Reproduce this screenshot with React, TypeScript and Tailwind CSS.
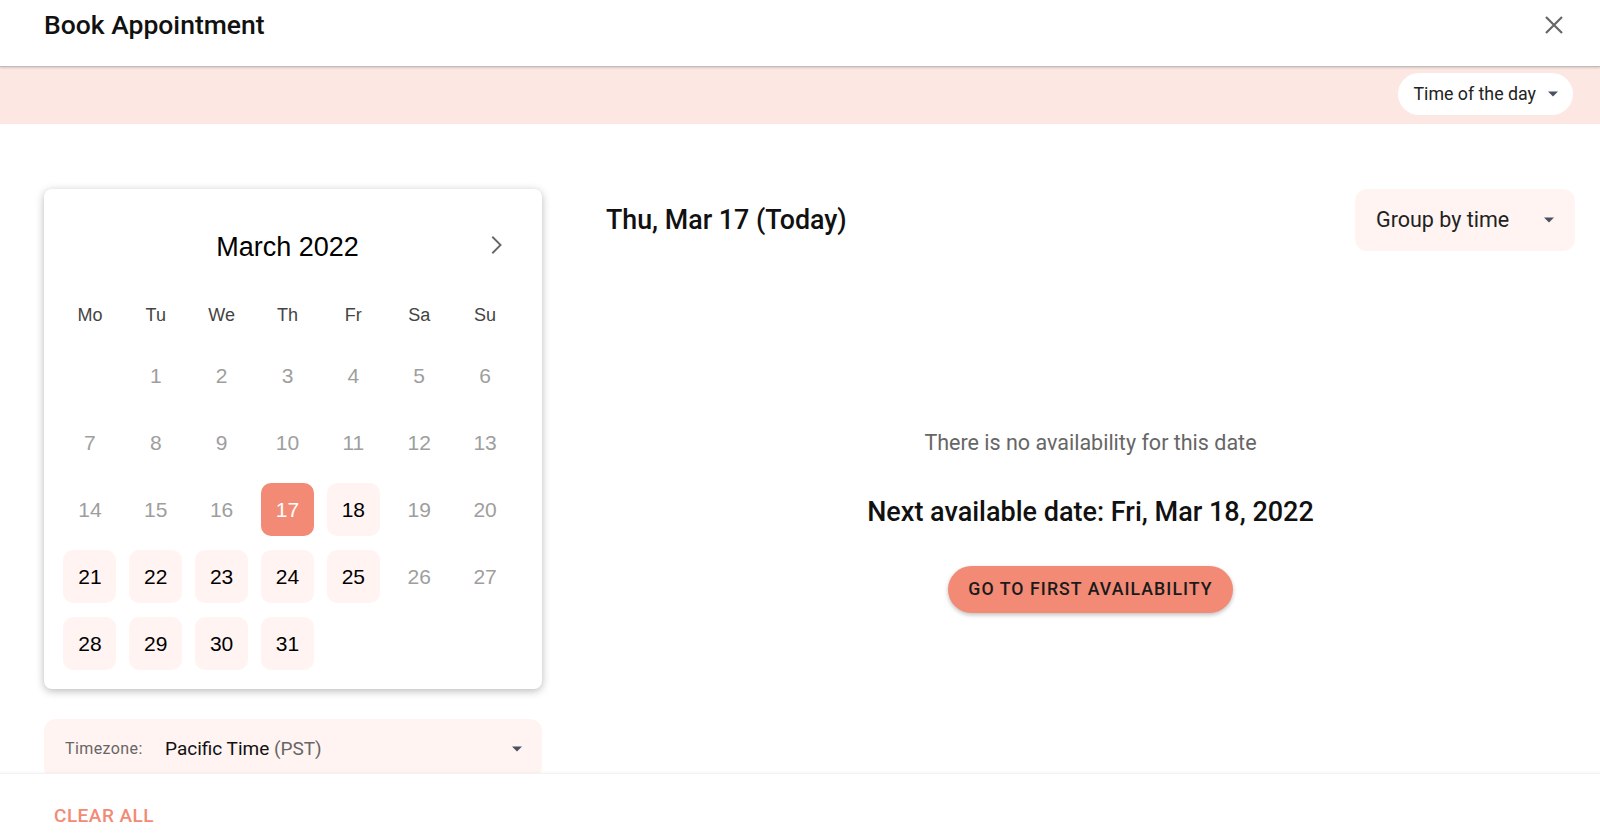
import React from 'react'

const roboto = { fontFamily: 'Roboto, "Liberation Sans", sans-serif' }

type Day = { n: number; kind: 'off' | 'open' | 'today' }

const off = (n: number): Day => ({ n, kind: 'off' })
const open = (n: number): Day => ({ n, kind: 'open' })

const weeks: Day[][] = [
  [off(0), off(1), off(2), off(3), off(4), off(5), off(6)],
  [off(7), off(8), off(9), off(10), off(11), off(12), off(13)],
  [off(14), off(15), off(16), { n: 17, kind: 'today' }, open(18), off(19), off(20)],
  [open(21), open(22), open(23), open(24), open(25), off(26), off(27)],
  [open(28), open(29), open(30), open(31), off(0), off(0), off(0)],
]

const Caret = ({ className = '' }: { className?: string }) => (
  <svg width="10" height="6" viewBox="0 0 10 5" className={className}>
    <path d="M0 0 L10 0 L5 5 Z" fill="#4a5160" />
  </svg>
)

const Calendar: React.FC = () => (
  <div
    className="w-[498px] h-[500px] shrink-0 rounded-lg bg-white shadow-[0_2px_8px_rgba(0,0,0,0.28)] pl-[13px] pr-[24px] pt-[38px]"
    style={{ fontFamily: '"Liberation Sans", Arial, sans-serif' }}
  >
    <div className="relative flex items-center justify-center h-[40px]">
      <span className="text-[27px] text-black">March 2022</span>
      <svg
        width="22"
        height="22"
        viewBox="0 0 24 24"
        className="absolute right-[11px] top-[7px]"
        fill="none"
        stroke="#666"
        strokeWidth="2"
      >
        <path d="M8 3 L17 12 L8 21" />
      </svg>
    </div>
    <div className="grid grid-cols-7 mt-[35px] text-[18px] text-[#444]">
      {['Mo', 'Tu', 'We', 'Th', 'Fr', 'Sa', 'Su'].map((d) => (
        <div key={d} className="text-center">
          {d}
        </div>
      ))}
    </div>
    <div className="mt-[20px] flex flex-col gap-[14px]">
      {weeks.map((week, i) => (
        <div key={i} className="grid grid-cols-7">
          {week.map((d, j) => (
            <div key={j} className="flex justify-center">
              <div
                className={
                  'w-[53px] h-[53px] rounded-[10px] flex items-center justify-center text-[21px] ' +
                  (d.kind === 'today'
                    ? 'bg-[#f28a75] text-white'
                    : d.kind === 'open'
                      ? 'bg-[#fff4f2] text-black'
                      : 'text-[#9e9e9e]')
                }
              >
                {d.n > 0 ? d.n : ''}
              </div>
            </div>
          ))}
        </div>
      ))}
    </div>
  </div>
)

export default function App() {
  return (
    <div className="w-[1600px] h-[834px] flex flex-col bg-white overflow-hidden" style={roboto}>
      <header className="h-[67px] shrink-0 flex items-start justify-between pl-[44px] pr-[34px] pt-[7px] border-b border-[#bdbdbd] shadow-[0_1px_2px_rgba(0,0,0,0.15)] relative z-10">
        <h1 className="text-[26.5px] font-medium text-[#111] leading-[36px]">Book Appointment</h1>
        <svg width="24" height="24" viewBox="0 0 24 24" className="mt-[6px]" stroke="#666" strokeWidth="2.2" fill="none">
          <path d="M4 4 L20 20 M20 4 L4 20" />
        </svg>
      </header>

      <div className="h-[57px] shrink-0 bg-[#fde7e3] flex items-center justify-end pr-[27px]">
        <button className="h-[42px] px-[15px] rounded-full bg-white flex items-center gap-[12px] text-[17.8px] text-[#222] mt-[-3px]">
          Time of the day
          <Caret />
        </button>
      </div>

      <main className="flex-1 overflow-hidden flex pl-[44px] pr-[25px] pt-[65px]">
        <div className="flex flex-col gap-[30px] shrink-0">
          <Calendar />
          <div className="w-[498px] h-[60px] shrink-0 rounded-[12px] bg-[#fff4f2] flex items-center pl-[21px] pr-[20px]">
            <span className="text-[16px] text-[#666] tracking-wide w-[100px]">Timezone:</span>
            <span className="text-[19px] text-[#111]">
              Pacific Time <span className="text-[#666]">(PST)</span>
            </span>
            <Caret className="ml-auto" />
          </div>
        </div>

        <section className="flex-1 ml-[64px] flex flex-col">
          <div className="flex items-start justify-between">
            <h2 className="text-[26.8px] leading-[32px] font-medium text-[#111] mt-[15px]">Thu, Mar 17 (Today)</h2>
            <button className="w-[220px] h-[62px] rounded-[12px] bg-[#fff4f2] flex items-center justify-between pl-[21px] pr-[21px] text-[21.5px] text-[#222]">
              Group by time
              <Caret />
            </button>
          </div>
          <div className="flex flex-col items-center mt-[179px]">
            <p className="text-[21.5px] leading-[26px] text-[#666]">There is no availability for this date</p>
            <p className="text-[27px] leading-[32px] font-medium text-[#111] mt-[40px]">
              Next available date: Fri, Mar 18, 2022
            </p>
            <button className="mt-[38px] h-[47px] w-[285px] rounded-full bg-[#f28a75] text-[#1a1a1a] text-[17.7px] font-medium tracking-[0.06em] shadow-[0_2px_4px_rgba(0,0,0,0.25)]">
              GO TO FIRST AVAILABILITY
            </button>
          </div>
        </section>
      </main>

      <footer className="h-[61px] shrink-0 flex items-center pl-[54px] border-t border-[#f2f2f2] shadow-[0_-1px_2px_rgba(0,0,0,0.03)]">
        <span className="text-[19px] text-[#f28a75] font-medium tracking-wide mt-[24px]">CLEAR ALL</span>
      </footer>
    </div>
  )
}
